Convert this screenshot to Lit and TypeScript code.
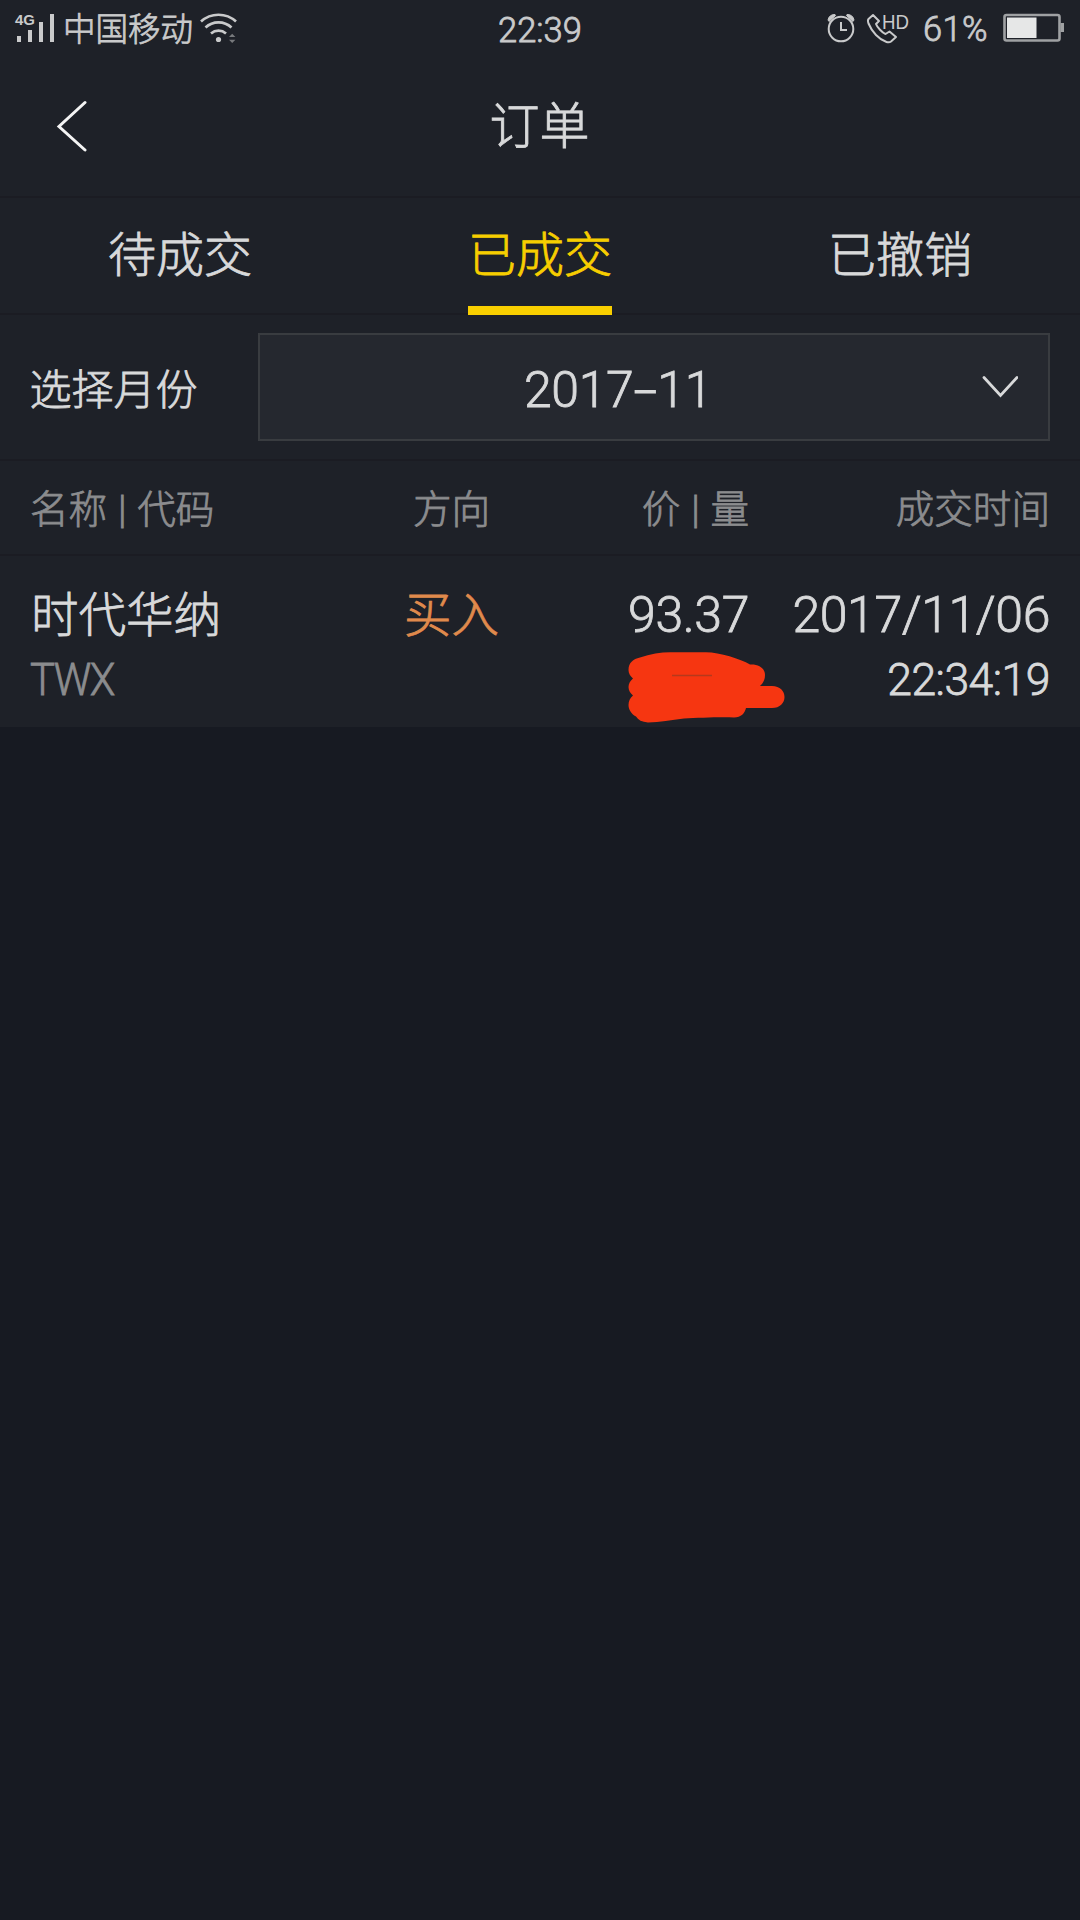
import { LitElement, html, css } from "lit";
import { customElement, property } from "lit/decorators.js";
import { classMap } from "lit/directives/class-map.js";

interface Order {
  name: string;
  code: string;
  side: string;
  price: string;
  date: string;
  time: string;
}

@customElement("status-bar")
class StatusBar extends LitElement {
  static styles = css`
    :host {
      display: grid;
      grid-template-columns: 1fr auto 1fr;
      align-items: center;
      height: 56px;
      padding: 0 16px 0 14px;
      color: #c9cacb;
    }
    .group { display: flex; align-items: center; }
    .right { justify-content: flex-end; padding-bottom: 2px; }
    svg { display: block; flex: none; overflow: visible; }
    .signal { margin-right: 7px; }
    .carrier { font-size: 32.5px; line-height: 56px; margin-right: 6px; padding-top: 1px; }
    .clock { font-size: 34.5px; line-height: 56px; padding: 2px 0 0 2px; }
    .alarm { margin-right: 9px; }
    .call { margin-right: 8px; }
    .percent { font-size: 34.5px; letter-spacing: 0.4px; margin-right: 15px; padding-top: 2px; }
    .net { font: 700 14px "Liberation Sans", sans-serif; -webkit-text-stroke: 0; }
    .hd { font: 400 21px "Liberation Sans", sans-serif; -webkit-text-stroke: 0.3px currentColor; }
  `;

  render() {
    return html`
      <div class="group">
        <svg class="signal" width="42" height="32" viewBox="0 0 42 32" fill="currentColor">
          <text class="net" x="1" y="11.5" textLength="20" lengthAdjust="spacingAndGlyphs">4G</text>
          <rect x="3" y="23" width="4" height="6" />
          <rect x="14" y="17" width="4" height="12" />
          <rect x="25" y="9" width="4" height="20" />
          <rect x="36" y="1" width="4" height="28" />
        </svg>
        <span class="carrier">中国移动</span>
        <svg width="40" height="32" viewBox="0 0 40 32" fill="none" stroke="currentColor" stroke-width="2.7">
          <path d="M2 8.500A26 26 0 0 1 37 8.500" />
          <path d="M6.500 14.500A19 19 0 0 1 32.500 14.500" />
          <path d="M12 20.500A11.500 11.500 0 0 1 27 20.500" />
          <circle cx="19.500" cy="26.500" r="2.600" fill="currentColor" stroke="none" />
          <path d="M30 24L33.200 20.800 36.400 24ZM30 26.800L33.200 30 36.400 26.800Z" fill="#77797c" stroke="none" />
        </svg>
      </div>
      <div class="clock">22:39</div>
      <div class="group right">
        <svg class="alarm" width="30" height="32" viewBox="0 0 30 32" fill="none" stroke="currentColor" stroke-width="2">
          <circle cx="15" cy="17" r="12.300" />
          <path d="M15 10V18H21" />
          <path d="M2 8A7 7 0 0 1 9 2.500L9.500 3.500 3 9.500Z M28 8A7 7 0 0 0 21 2.500L20.500 3.500 27 9.500Z" fill="currentColor" stroke-width="1" />
        </svg>
        <svg class="call" width="50" height="32" viewBox="0 0 50 32" fill="none" stroke="currentColor" stroke-width="2" stroke-linejoin="round">
          <path d="M8 3L3.500 7C2.500 8 3 10 3.500 11.500C7 20 14 27.500 21.500 30C23 30.500 25 30.300 26 29.500L31 25 24.500 19.500 20.500 22C17.500 21 12 15 11 12L14 9Z" />
          <text class="hd" x="17" y="16.500" fill="currentColor" stroke="none" textLength="27" lengthAdjust="spacingAndGlyphs">HD</text>
        </svg>
        <span class="percent">61%</span>
        <svg width="61" height="30" viewBox="0 0 61 30">
          <rect x="1.500" y="2" width="55" height="25.500" rx="2" fill="none" stroke="#9fa1a3" stroke-width="2.600" />
          <rect x="4" y="4.500" width="29.500" height="20.500" fill="#e6e7e7" />
          <rect x="57.500" y="10" width="3.500" height="9" fill="#9fa1a3" />
        </svg>
      </div>
    `;
  }
}

@customElement("nav-header")
class NavHeader extends LitElement {
  @property() heading = "";

  static styles = css`
    :host {
      display: grid;
      grid-template-columns: 120px 1fr 120px;
      align-items: center;
      box-sizing: border-box;
      height: 142px;
      margin-bottom: -1px;
      border-bottom: 2px solid #1b1c23;
    }
    .back { display: block; margin-left: 55px; }
    .title { text-align: center; font-size: 50px; line-height: 72px; padding: 2px 1px 0 0; }
  `;

  render() {
    return html`
      <svg class="back" width="34" height="52" viewBox="0 0 34 52" fill="none" stroke="#f4f4f4" stroke-width="3">
        <path d="M30 2.500L4 26.500 30 50" stroke-linecap="round" />
      </svg>
      <div class="title">${this.heading}</div>
    `;
  }
}

@customElement("tab-strip")
class TabStrip extends LitElement {
  @property({ attribute: false }) tabs: string[] = [];
  @property({ type: Number }) selected = 0;

  static styles = css`
    :host {
      display: grid;
      grid-template-columns: repeat(3, 1fr);
      justify-items: center;
      height: 118px;
      background: linear-gradient(#1b1c23, #1b1c23) bottom / 100% 2px no-repeat;
    }
    .tab {
      box-sizing: border-box;
      height: 118px;
      font-size: 48px;
      line-height: 117px;
      border-bottom: 9px solid transparent;
    }
    .active { color: #f7ce00; border-color: #f9cf00; }
  `;

  render() {
    return this.tabs.map(
      (label, i) => html`<div class=${classMap({ tab: true, active: i === this.selected })}>${label}</div>`
    );
  }
}

@customElement("month-picker")
class MonthPicker extends LitElement {
  @property() value = "";

  static styles = css`
    :host {
      display: flex;
      align-items: center;
      box-sizing: border-box;
      height: 146px;
      padding: 0 30px;
      border-bottom: 2px solid #1b1c23;
    }
    .label { width: 228px; font-size: 42px; line-height: 60px; padding-top: 7px; text-indent: -0.5px; }
    .field {
      flex: 1;
      display: flex;
      align-items: center;
      box-sizing: border-box;
      height: 108px;
      padding-right: 30px;
      background: #25282f;
      border: 2px solid #393c40;
    }
    .value { flex: 1; text-align: center; font-size: 50px; letter-spacing: -0.4px; padding: 6px 6px 0 0; }
    .dash { display: inline-block; width: 24px; transform: scaleX(1.7); }
    svg { display: block; }
  `;

  render() {
    const [year, month] = this.value.split("-");
    return html`
      <div class="label">选择月份</div>
      <div class="field">
        <div class="value">${year}<span class="dash">-</span>${month}</div>
        <svg width="36" height="24" viewBox="0 0 36 24" fill="none" stroke="#d8d9da" stroke-width="2.800">
          <path d="M2 2.500L18.500 20.500 35 2.500" stroke-linecap="round" />
        </svg>
      </div>
    `;
  }
}

@customElement("order-table")
class OrderTable extends LitElement {
  @property({ attribute: false }) orders: Order[] = [];

  static styles = css`
    :host { display: block; }
    .head, .row {
      display: grid;
      grid-template-columns: 322px 199px 198px 301px;
      padding: 0 30px;
      box-sizing: border-box;
    }
    .head {
      height: 95px;
      color: #8b8c8e;
      font-size: 38.6px;
      line-height: 98px;
      border-bottom: 2px solid #1b1c23;
    }
    .row { height: 171px; padding-top: 24px; }
    .center { text-align: center; }
    .end { text-align: right; }
    .bar { display: inline-block; width: 30px; text-align: center; }
    .name, .side { font-size: 47.5px; line-height: 72px; height: 70px; }
    .name { text-indent: 1px; }
    .side { color: #e08a4c; }
    .code {
      width: max-content;
      font-size: 45px;
      line-height: 52px;
      padding-top: 4px;
      letter-spacing: -1.6px;
      color: #8b8c8e;
      transform: scaleX(0.93);
      transform-origin: left;
    }
    .num { font-size: 50px; letter-spacing: -0.4px; line-height: 70px; height: 70px; }
    .time { font-size: 44.5px; letter-spacing: -0.5px; line-height: 52px; padding-top: 4px; }
    .priced { position: relative; }
    .scribble { position: absolute; left: 77px; top: 72px; }
  `;

  render() {
    return html`
      <div class="head">
        <div>名称<span class="bar">|</span>代码</div>
        <div class="center">方向</div>
        <div class="end">价<span class="bar">|</span>量</div>
        <div class="end">成交时间</div>
      </div>
      ${this.orders.map(
        (o) => html`
          <div class="row">
            <div>
              <div class="name">${o.name}</div>
              <div class="code">${o.code}</div>
            </div>
            <div class="center side">${o.side}</div>
            <div class="end priced">
              <div class="num">${o.price}</div>
              <svg class="scribble" width="158" height="72" viewBox="0 0 158 72">
                <path
                  fill="#f63611"
                  d="M.5 18C.5 11 5 7 12 5.500C22 2 33 .3 42 .3H78C92 .3 112 7 122 12.500C132 12 137 17 137 23C137 28 135 31 132 34H144C152 34 156.500 39 156.500 45C156.500 51 152 56 144 56H118C117 61 113 65.500 106 65.500C90 65 70 66 56 66.500C43 68 32 70 20 70.500C14 70 10 68 8 64.500C3 62 .5 57 .5 53C.5 49 2 46 5 43.500C2 41 .5 38 .5 35C.5 32 2 29 5 26.500C2 24 .5 21 .5 18Z"
                />
                <path d="M44 23.500H84" stroke="#b5391c" stroke-width="1.300" />
              </svg>
            </div>
            <div class="end">
              <div class="num">${o.date}</div>
              <div class="time">${o.time}</div>
            </div>
          </div>
        `
      )}
    `;
  }
}

@customElement("app-root")
class AppRoot extends LitElement {
  private tabs = ["待成交", "已成交", "已撤销"];
  private orders: Order[] = [
    { name: "时代华纳", code: "TWX", side: "买入", price: "93.37", date: "2017/11/06", time: "22:34:19" },
  ];

  static styles = css`
    :host {
      display: block;
      width: 1080px;
      min-height: 1920px;
      background: #171a22;
      color: #d8d9da;
      font-family: Roboto, "Noto Sans CJK SC", sans-serif;
      font-weight: 300;
      -webkit-text-stroke: 0.8px currentColor;
    }
    .panel { background: #1e2128; }
  `;

  render() {
    return html`
      <div class="panel">
        <status-bar></status-bar>
        <nav-header heading="订单"></nav-header>
        <tab-strip .tabs=${this.tabs} selected="1"></tab-strip>
        <month-picker value="2017-11"></month-picker>
        <order-table .orders=${this.orders}></order-table>
      </div>
    `;
  }
}
